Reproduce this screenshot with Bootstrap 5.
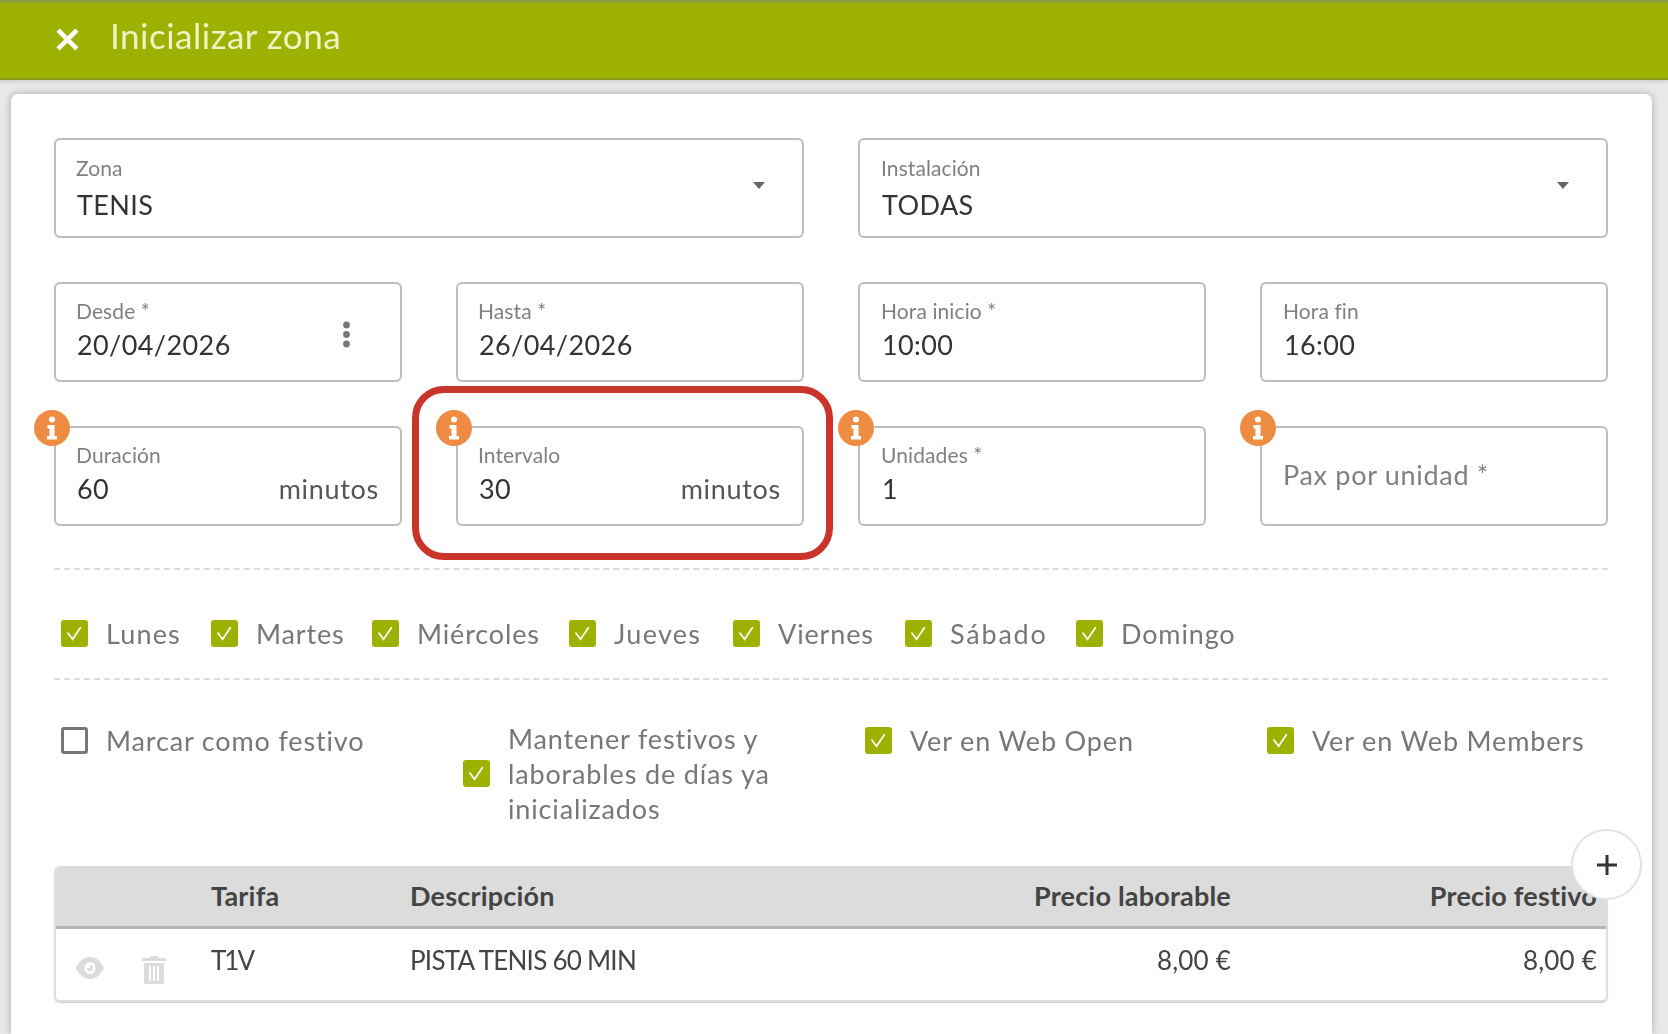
<!doctype html>
<html lang="es">
<head>
<meta charset="utf-8">
<title>Inicializar zona</title>
<link href="https://cdn.jsdelivr.net/npm/bootstrap@5.3.0/dist/css/bootstrap.min.css" rel="stylesheet">
<style>
html,body{height:100%;overflow:hidden}
body{background:#e9e9e9;font-family:Lato,"Open Sans",sans-serif;color:#333}
.topbar{height:80px;background:#9db200;border-top:3px solid #90a03c;border-bottom:2px solid #8b9c1c;box-shadow:0 2px 4px rgba(0,0,0,.12);padding-left:55px;gap:30px;padding-bottom:3px;filter:blur(.5px)}
.topbar h1{font-size:35px;font-weight:400;color:#eef4c4;margin:0 0 8px;letter-spacing:.5px}
.sheet{margin:14px 16px 0 11px;height:940px;background:#fff;border-radius:7px 7px 0 0;box-shadow:0 0 8px rgba(0,0,0,.28);padding:44px 44px 0 43px;filter:blur(.5px)}
.fieldgrid{display:grid;grid-template-columns:repeat(4,1fr);column-gap:54px;row-gap:44px}
.span2{grid-column:span 2}
.fbox{position:relative;height:100px;border:2px solid #bdbdbd;border-radius:6px;padding:0 21px 0 20px;display:flex;align-items:center;justify-content:space-between}
.fbox.pushed{padding-left:21px}
.fcol{display:flex;flex-direction:column}
.flabel{font-size:21px;line-height:26px;color:#808080;letter-spacing:.1px;margin-top:1px}
.fvalue{font-size:27px;line-height:36px;color:#333;letter-spacing:.4px;margin-top:6px;margin-left:1px}
.tall .fcol{margin-top:-4px}
.tall .fvalue{margin-top:3px}
.funit{font-size:27px;line-height:36px;color:#555;align-self:flex-end;margin-bottom:17px;letter-spacing:.7px}
.fplace{font-size:27px;color:#808080;letter-spacing:.7px;margin-top:-2px}
.caret{width:0;height:0;border-left:6.5px solid transparent;border-right:6.5px solid transparent;border-top:7px solid #666;margin-right:16px;margin-top:-6px}
.kebab{margin-right:28px;margin-top:5px}
.infodot{position:absolute;left:-22px;top:-18px;width:36px;height:36px}
.redmark{position:absolute;left:-46px;top:-42px;width:421px;height:174px;border:7px solid #c9352a;border-radius:32px;pointer-events:none}
.dash{border:0;border-top:2px dashed #dcdcdc;opacity:1;margin:0}
.dash1{margin-top:42px}
.days{display:flex;padding:48px 0 30px 7px;height:108px}
.opt{display:flex;align-items:center;font-size:27px;color:#777;letter-spacing:.85px;line-height:35px}
.opt .form-check-input{flex:none;width:27px;height:27px;margin:0 18px 0 0;border:3px solid #777;border-radius:3px;box-shadow:none;background-color:#fff}
.opt .form-check-input:checked{background-color:#9db200;border-color:#9db200;background-image:url("data:image/svg+xml,%3csvg xmlns='http://www.w3.org/2000/svg' viewBox='0 0 27 27'%3e%3cpath fill='none' stroke='%23fff' stroke-width='2.2' stroke-linecap='round' d='M5 13l6 8 10-15'/%3e%3c/svg%3e");background-size:100%}
.dw1{width:150px;letter-spacing:1.15px}.dw2{width:161px}.dw3{width:197px}.dw4{width:164px;letter-spacing:1.3px}.dw5{width:172px}.dw6{width:171px;letter-spacing:1.8px}
.opts{display:grid;grid-template-columns:repeat(4,1fr);column-gap:54px;padding-top:41px;align-items:start}
.opts .opt{padding-left:7px;min-height:38px}
.tablewrap{position:relative;margin-top:40px}
.ratetable{table-layout:fixed;width:100%;margin:0;border-collapse:separate;border-spacing:0;border:2px solid #dedede;border-top:0;border-radius:6px;overflow:hidden;font-size:26px;box-shadow:0 1px 1px #ccc}
.ratetable th{background:#dcdcdc;color:#444;font-weight:700;font-size:27px;height:63px;padding:0 9px 0 10px;border-bottom:3px solid #b4b4b4;vertical-align:middle;letter-spacing:.2px}
.ratetable td{height:71px;padding:0 9px 8px 10px;border:0;color:#444;vertical-align:middle;letter-spacing:.2px}
.ratetable td.tight{letter-spacing:-.75px}
.ratetable td.tighter{letter-spacing:-2px}
.w1{width:145px}.w2{width:199px}.w3{width:459px}.w4{width:381px}
.rowicons{display:flex;gap:37px;padding-left:9px;padding-top:19px}
.addbtn{position:absolute;right:-34px;top:-37px;width:71px;height:71px;border-radius:50%;background:#fff;border:2px solid #e2e2e2;padding:0;display:flex;align-items:center;justify-content:center}
</style>
</head>
<body>
<header class="topbar d-flex align-items-center">
  <svg width="25" height="25" viewBox="0 0 24 24" aria-label="Cerrar"><path d="M3 3l18 18M21 3L3 21" stroke="#fff" stroke-width="4.4" fill="none"/></svg>
  <h1>Inicializar zona</h1>
</header>
<main class="sheet">
  <div class="fieldgrid">
    <div class="fbox span2"><div class="fcol"><span class="flabel">Zona</span><span class="fvalue">TENIS</span></div><span class="caret"></span></div>
    <div class="fbox span2 pushed"><div class="fcol"><span class="flabel">Instalación</span><span class="fvalue">TODAS</span></div><span class="caret"></span></div>

    <div class="fbox tall"><div class="fcol"><span class="flabel">Desde *</span><span class="fvalue">20/04/2026</span></div>
      <svg class="kebab" width="9" height="27" viewBox="0 0 9 27"><circle cx="4.5" cy="4" r="3.4" fill="#777"/><circle cx="4.5" cy="13.5" r="3.4" fill="#777"/><circle cx="4.500" cy="23" r="3.4" fill="#777"/></svg></div>
    <div class="fbox tall"><div class="fcol"><span class="flabel">Hasta *</span><span class="fvalue">26/04/2026</span></div></div>
    <div class="fbox tall pushed"><div class="fcol"><span class="flabel">Hora inicio *</span><span class="fvalue">10:00</span></div></div>
    <div class="fbox tall pushed"><div class="fcol"><span class="flabel">Hora fin</span><span class="fvalue">16:00</span></div></div>

    <div class="fbox tall"><svg class="infodot" viewBox="0 0 36 36"><circle cx="18" cy="18" r="18" fill="#ee8c43"/><circle cx="18" cy="9.5" r="3" fill="#fff"/><path d="M13.5 15h7v11h2.5v3.5h-10V26h2.5v-7.5h-2z" fill="#fff"/></svg>
      <div class="fcol"><span class="flabel">Duración</span><span class="fvalue">60</span></div><span class="funit">minutos</span></div>
    <div class="fbox tall"><svg class="infodot" viewBox="0 0 36 36"><circle cx="18" cy="18" r="18" fill="#ee8c43"/><circle cx="18" cy="9.5" r="3" fill="#fff"/><path d="M13.5 15h7v11h2.5v3.5h-10V26h2.5v-7.5h-2z" fill="#fff"/></svg>
      <div class="fcol"><span class="flabel">Intervalo</span><span class="fvalue">30</span></div><span class="funit">minutos</span><span class="redmark"></span></div>
    <div class="fbox tall pushed"><svg class="infodot" viewBox="0 0 36 36"><circle cx="18" cy="18" r="18" fill="#ee8c43"/><circle cx="18" cy="9.5" r="3" fill="#fff"/><path d="M13.5 15h7v11h2.5v3.5h-10V26h2.5v-7.5h-2z" fill="#fff"/></svg>
      <div class="fcol"><span class="flabel">Unidades *</span><span class="fvalue">1</span></div></div>
    <div class="fbox tall pushed"><svg class="infodot" viewBox="0 0 36 36"><circle cx="18" cy="18" r="18" fill="#ee8c43"/><circle cx="18" cy="9.5" r="3" fill="#fff"/><path d="M13.5 15h7v11h2.5v3.5h-10V26h2.5v-7.5h-2z" fill="#fff"/></svg>
      <span class="fplace">Pax por unidad *</span></div>
  </div>

  <hr class="dash dash1">
  <div class="days">
    <label class="opt dw1"><input class="form-check-input" type="checkbox" checked>Lunes</label>
    <label class="opt dw2"><input class="form-check-input" type="checkbox" checked>Martes</label>
    <label class="opt dw3"><input class="form-check-input" type="checkbox" checked>Miércoles</label>
    <label class="opt dw4"><input class="form-check-input" type="checkbox" checked>Jueves</label>
    <label class="opt dw5"><input class="form-check-input" type="checkbox" checked>Viernes</label>
    <label class="opt dw6"><input class="form-check-input" type="checkbox" checked>Sábado</label>
    <label class="opt"><input class="form-check-input" type="checkbox" checked>Domingo</label>
  </div>
  <hr class="dash">

  <div class="opts">
    <label class="opt"><input class="form-check-input" type="checkbox">Marcar como festivo</label>
    <label class="opt"><input class="form-check-input" type="checkbox" checked>Mantener festivos y laborables de días ya inicializados</label>
    <label class="opt"><input class="form-check-input" type="checkbox" checked>Ver en Web Open</label>
    <label class="opt"><input class="form-check-input" type="checkbox" checked>Ver en Web Members</label>
  </div>

  <div class="tablewrap">
    <table class="table ratetable">
      <colgroup><col class="w1"><col class="w2"><col class="w3"><col class="w4"><col></colgroup>
      <thead><tr><th></th><th>Tarifa</th><th>Descripción</th><th class="text-end">Precio laborable</th><th class="text-end">Precio festivo</th></tr></thead>
      <tbody><tr>
        <td><div class="rowicons">
          <svg width="30" height="24" viewBox="0 0 30 22" preserveAspectRatio="none"><path fill="#dcdcdc" fill-rule="evenodd" d="M15 1C8.500 1 3.500 5.500 1 11c2.500 5.500 7.500 10 14 10s11.500-4.500 14-10C26.500 5.500 21.500 1 15 1zm0 4.500a5.500 5.500 0 1 1 0 11 5.500 5.500 0 0 1 0-11z"/><path fill="#dcdcdc" d="M15 8v3h-3a3 3 0 1 0 3-3z"/></svg>
          <svg width="24" height="28" viewBox="0 0 24 28"><path fill="#dcdcdc" fill-rule="evenodd" d="M8 0h8v2h8v3H0V2h8zM2 7h20v19a2 2 0 0 1-2 2H4a2 2 0 0 1-2-2zm5 3v15h2V10zm4 0v15h2V10zm4 0v15h2V10z"/></svg>
        </div></td>
        <td class="tighter">T1V</td><td class="tight">PISTA TENIS 60 MIN</td><td class="text-end">8,00 €</td><td class="text-end">8,00 €</td>
      </tr></tbody>
    </table>
    <button class="addbtn" type="button" aria-label="Añadir"><svg width="22" height="22" viewBox="0 0 22 22"><path d="M11 1v20M1 11h20" stroke="#333" stroke-width="3" fill="none"/></svg></button>
  </div>
</main>
<script src="https://cdn.jsdelivr.net/npm/bootstrap@5.3.0/dist/js/bootstrap.bundle.min.js"></script>
</body>
</html>
